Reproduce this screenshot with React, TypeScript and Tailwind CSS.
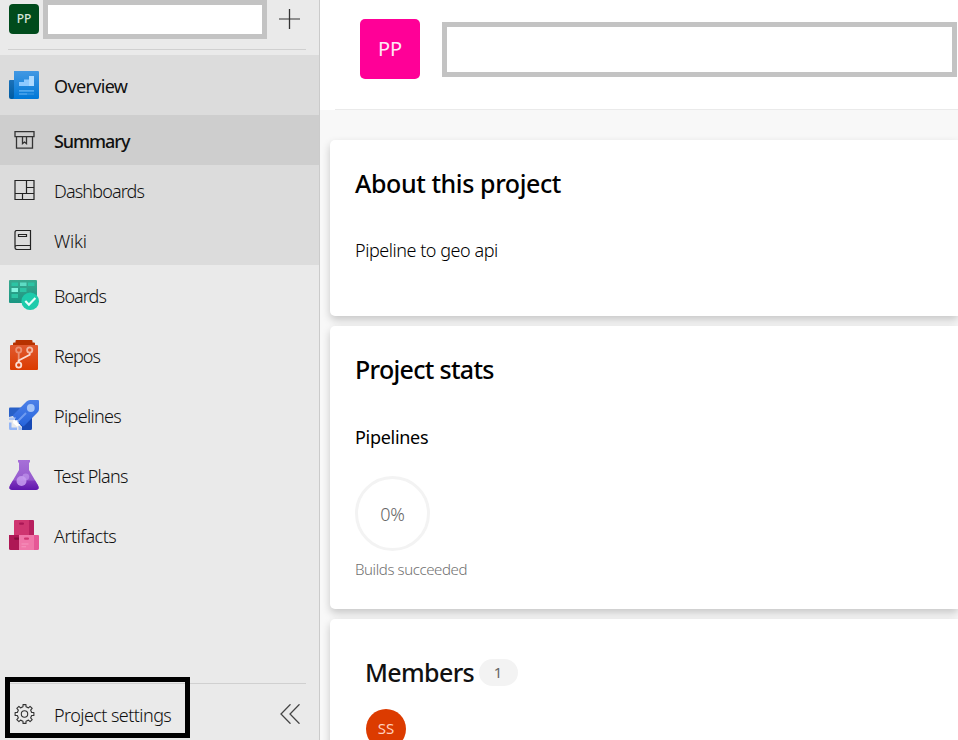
import type { ReactNode } from "react";

function OverviewIcon() {
  return (
    <svg width="30" height="30" viewBox="0 0 30 30">
      <defs>
        <linearGradient id="ov" x1="0" y1="0" x2="0" y2="1"><stop stopColor="#4298e3" /><stop offset="1" stopColor="#0078d7" /></linearGradient>
        <linearGradient id="ovb" x1="0" y1="0" x2="0" y2="1"><stop stopColor="#1b72ba" /><stop offset="1" stopColor="#005ba1" /></linearGradient>
      </defs>
      <g transform="translate(0 1)">
        <path d="M0 10q0-1 1-1h6v19H2q-2 0-2-2z" fill="url(#ovb)" />
        <path d="M5 0h24q1 0 1 1v25.500q0 1.500-1.500 1.500H3q2 0 2-2z" fill="url(#ov)" />
        <path d="M10 15v-4h5V8.500h5V5h5v10z" fill="#8fcaff" />
        <path d="M20 5h5v10h-5z" fill="#c3e5ff" opacity=".6" />
        <path d="M10 19h15v1.700H10zM10 22.200h8v1.600h-8z" fill="#50a8ee" />
        <path d="M18 22.200h7v1.600h-7z" fill="#2c90df" />
      </g>
    </svg>
  );
}

function BoardsIcon() {
  return (
    <svg width="30" height="30" viewBox="0 0 30 30">
      <defs>
        <linearGradient id="bo" x1="0" y1="0" x2="0" y2="1"><stop stopColor="#3aa98f" /><stop offset="1" stopColor="#1a9682" /></linearGradient>
      </defs>
      <rect width="28" height="23" rx="1" fill="url(#bo)" />
      <path d="M2.500 2.500H9V6H2.500zM19 2.500h6.500V6H19zM11 8h6.500v4H11zM2.500 14H9v4H2.500z" fill="#2cc4a4" />
      <path d="M11 2.500h6.500V6H11z" fill="#5ddcc4" />
      <path d="M2.500 8H9v4H2.500z" fill="#83f5df" />
      <circle cx="21.200" cy="21.200" r="8.800" fill="#1dcbab" />
      <path d="M16.300 21l3.600 3.700 6.500-6.700" fill="none" stroke="#e6fffa" strokeWidth="2.200" />
    </svg>
  );
}

function ReposIcon() {
  return (
    <svg width="30" height="30" viewBox="0 0 30 30">
      <defs>
        <linearGradient id="re" x1="0" y1="0" x2="0" y2="1"><stop stopColor="#e05a30" /><stop offset="1" stopColor="#db3b00" /></linearGradient>
      </defs>
      <path d="M4 5V3.500q0-1 1-1h1.500V1q0-1 1-1h15q1 0 1 1v1.500H25q1 0 1 1V5z" fill="#b73200" />
      <path d="M1 6q0-1 1-1h26q1 0 1 1v23q0 1-1 1H2q-1 0-1-1z" fill="url(#re)" />
      <g fill="none" strokeWidth="1.800">
        <path d="M9.700 13v9" stroke="#eb9174" />
        <circle cx="9.700" cy="10" r="2.600" stroke="#eb9174" />
        <path d="M20.700 12.700v2L9.700 20.500v2" stroke="#fbddd3" />
        <circle cx="20.700" cy="10" r="2.600" stroke="#f3b8a4" />
        <circle cx="9.700" cy="25" r="2.600" stroke="#fbddd3" />
      </g>
    </svg>
  );
}

function PipelinesIcon() {
  return (
    <svg width="30" height="30" viewBox="0 0 30 30">
      <defs>
        <linearGradient id="pi" x1="0" y1="0" x2="0" y2="1"><stop stopColor="#4c80e8" /><stop offset="1" stopColor="#2664dc" /></linearGradient>
      </defs>
      <path d="M0 8.500q0-1 1-1h12l-6 13H4L0 17z" fill="#2860c8" />
      <path d="M9 23l14-8v13.500q0 1.500-1.500 1.500H13v-3z" fill="#1749b5" />
      <path d="M17.500 1.500Q19 0 21 0h8q1 0 1 1v8q0 2-1.500 3.500L15 26q-1 .6-2-.4L4.500 17q-1-1-.4-2z" fill="url(#pi)" />
      <circle cx="21.800" cy="8" r="3.900" fill="#a3c3f8" />
      <path d="M8 22l9-9" stroke="#6f9bf0" strokeWidth="2" />
      <path d="M0 17l4-1 2.500 4.500 3.500 3.500L13 27v3H0z" fill="#eaeaea" />
      <path d="M4.500 19l2.500 2 1.500-1v3l3 2-3.500 1.500L4 23z" fill="#fff" />
      <path d="M0 17.500h7l-1.500 2.500H0zM9.500 25.500v4.500H13v-2z" fill="#a9c2f3" />
      <path d="M0 22.500h2.500V27.500H8V30H1.500Q0 30 0 28.500z" fill="#93b5f5" />
    </svg>
  );
}

function TestPlansIcon() {
  return (
    <svg width="30" height="30" viewBox="0 0 30 30">
      <defs>
        <linearGradient id="te" x1="0" y1="0" x2="0" y2="1"><stop stopColor="#a770d8" /><stop offset="1" stopColor="#8c50c8" /></linearGradient>
        <linearGradient id="tf" x1="0" y1="0" x2="0" y2="1"><stop stopColor="#7f37bd" /><stop offset="1" stopColor="#5f16ad" /></linearGradient>
      </defs>
      <path d="M9 0h12v2.500h-1V10l8.500 14.500q3 5.500-2 5.500h-23q-5 0-2-5.500L10 10V2.500H9z" fill="url(#te)" />
      <path d="M4 20.500h22l2.500 4q3 5.500-2 5.500h-23q-5 0-2-5.500z" fill="url(#tf)" />
      <circle cx="12.500" cy="21" r="5" fill="#c79cf0" opacity=".85" />
      <circle cx="16.800" cy="16.800" r="3.400" fill="#c79cf0" opacity=".6" />
    </svg>
  );
}

function ArtifactsIcon() {
  return (
    <svg width="30" height="30" viewBox="0 0 30 30">
      <path d="M5 1q0-1 1-1h14v15H5z" fill="#cf3570" />
      <path d="M20 0h4q1 0 1 1v14h-5z" fill="#b7205f" />
      <path d="M0 15h10v15H1.500Q0 30 0 28.500z" fill="#ae1755" />
      <path d="M10 15h15v15H10z" fill="#f076a9" />
      <path d="M25 15h4q1 0 1 1v12.500q0 1.500-1.500 1.500H25z" fill="#e65796" />
      <rect x="10" y="2.500" width="5" height="2.300" rx="1.100" fill="#ab1756" />
      <path d="M5.200 17.500H10v2.300H6q-1 0-.8-2.300z" fill="#850d3c" />
      <rect x="15" y="17.500" width="5" height="2.300" rx="1.100" fill="#cf3570" />
      <path d="M12.500 23.500h7v1h-7zM12.500 26.300h4.500v1h-4.500z" fill="#f594bd" />
    </svg>
  );
}

function SummaryIcon() {
  return (
    <svg width="21" height="20" viewBox="0 0 21 20" fill="none" stroke="#333">
      <path d="M1 1.700h19v5H1zM2.500 6.700v11.500h16V6.700M8.500 6.700v7l2-1.700 2 1.700v-7" strokeWidth="1.300" />
    </svg>
  );
}

function DashboardsIcon() {
  return (
    <svg width="21" height="20" viewBox="0 0 21 20" fill="none" stroke="#222">
      <path d="M1 .5h19v19H1zM12.500 .5v13M1 13.500h19M12.500 7.500H20M8.500 13.500v6" strokeWidth="1.200" />
    </svg>
  );
}

function WikiIcon() {
  return (
    <svg width="21" height="20" viewBox="0 0 21 20" fill="none" stroke="#222">
      <path d="M16.500 15.500V.5H3q-2 0-2 2v15q0 2 2 2h13.500v-4H3q-2 0-2 2M4.500 4.500h8v2h-8z" strokeWidth="1.200" />
    </svg>
  );
}

const gearTeeth = Array.from({ length: 8 }, (_, i) => {
  const point = (degrees: number, radius: number) => {
    const a = ((i * 45 + degrees) * Math.PI) / 180;
    return `${(10 + radius * Math.sin(a)).toFixed(2)} ${(10 - radius * Math.cos(a)).toFixed(2)}`;
  };
  return [point(-12, 7.3), point(-9, 9.5), point(9, 9.5), point(12, 7.3)].join("L");
}).join("L");

function GearIcon() {
  return (
    <svg width="21" height="20" viewBox="-.5 0 21 20" fill="none" stroke="#333" strokeWidth="1.100" strokeLinejoin="round">
      <path d={`M${gearTeeth}Z`} />
      <circle cx="10" cy="10" r="3.200" />
    </svg>
  );
}

type RowProps = { icon: ReactNode; label: string; className: string; text: string };

function Row({ icon, label, className, text }: RowProps) {
  return (
    <a className={`flex items-center pl-[9px] ${className}`}>
      <span className="flex w-[30px] shrink-0 justify-center">{icon}</span>
      <span className={`ml-[15px] whitespace-nowrap pt-px ${text}`}>{label}</span>
    </a>
  );
}

function Sidebar() {
  return (
    <nav className="relative flex h-full w-[320px] shrink-0 flex-col border-r border-[#cbcbcb] bg-[#eaeaea]">
      <div className="ml-2 mr-[13px] flex h-[50px] shrink-0 items-start border-b border-[#d0d0d0]">
        <div className="ml-px mt-1 flex size-[30px] items-center justify-center rounded-[4px] bg-[#004b1c] text-[12px] font-medium text-[#d5e5da]">PP</div>
        <div className="ml-1 h-[39px] w-[224px] border-5 border-[#c3c3c3] bg-white" />
        <svg className="ml-3 mt-[9px]" width="21" height="20" viewBox="0 0 21 20">
          <path d="M0 10h21" stroke="#777" strokeWidth="1.600" />
          <path d="M10.500 0v20" stroke="#333" strokeWidth="1.300" />
        </svg>
      </div>
      <div className="mt-[5px] bg-[#dcdcdc]">
        <Row icon={<OverviewIcon />} label="Overview" className="h-[60px]" text="font-[430] tracking-[-0.65px]" />
        <Row icon={<SummaryIcon />} label="Summary" className="h-[50px] bg-[#cecece]" text="font-medium tracking-[-1.05px]" />
        <Row icon={<DashboardsIcon />} label="Dashboards" className="h-[50px]" text="font-[340] tracking-[-0.85px]" />
        <Row icon={<WikiIcon />} label="Wiki" className="h-[50px]" text="font-[340] tracking-[-0.2px]" />
      </div>
      <Row icon={<BoardsIcon />} label="Boards" className="h-[60px]" text="font-[340] tracking-[-0.95px]" />
      <Row icon={<ReposIcon />} label="Repos" className="h-[60px]" text="font-[340] tracking-[-0.9px]" />
      <Row icon={<PipelinesIcon />} label="Pipelines" className="h-[60px]" text="font-[340] tracking-[-0.65px]" />
      <Row icon={<TestPlansIcon />} label="Test Plans" className="h-[60px]" text="font-[340] tracking-[-0.75px]" />
      <Row icon={<ArtifactsIcon />} label="Artifacts" className="h-[60px]" text="font-[340] tracking-[-0.5px]" />
      <div className="mt-auto flex h-[57px] shrink-0 flex-col">
        <div className="ml-2 mr-[13px] h-px shrink-0 bg-[#d0d0d0]" />
        <div className="flex h-[60px] shrink-0 items-center">
          <Row icon={<GearIcon />} label="Project settings" className="h-[60px]" text="font-[340] tracking-[-0.56px]" />
          <svg className="ml-auto mr-[19px]" width="20" height="20" viewBox="0 0 20 20" fill="none" stroke="#444" strokeWidth="1.300">
            <path d="M10.500 .3L1 10l9.500 9.700M19.500 .3L10 10l9.500 9.700" />
          </svg>
        </div>
      </div>
      <div className="absolute left-[5px] top-[677px] h-[61px] w-[185px] border-5 border-black" />
    </nav>
  );
}

const card = "shrink-0 rounded-l-[5px] bg-white pl-[25px] shadow-[0_4px_9px_rgba(0,0,0,0.2)]";
const title = "whitespace-nowrap text-[25px] leading-8 font-medium";

export default function App() {
  return (
    <div className="flex h-[740px] w-[958px] overflow-hidden bg-[#f8f8f8] font-['Noto_Sans','Segoe_UI',sans-serif] text-[18px] leading-6 text-[#111]">
      <Sidebar />
      <main className="flex min-w-0 flex-1 flex-col overflow-hidden">
        <header className="flex h-[110px] shrink-0 flex-col bg-white">
          <div className="flex h-[109px] items-start">
            <div className="ml-10 mt-[19px] flex size-[60px] items-center justify-center rounded-[5px] bg-[#ff0097] text-[20px] text-[#ffe8f5]">PP</div>
            <div className="ml-[22px] mt-[22px] h-[55px] w-[515px] border-5 border-[#c3c3c3] bg-white" />
          </div>
          <div className="ml-[15px] h-px bg-[#eaeaea]" />
        </header>
        <div className="mt-[30px] flex flex-col gap-[10px] pl-[10px]">
          <section className={`h-[176px] ${card}`}>
            <h2 className={`pt-[27px] text-black tracking-[-0.41px] ${title}`}>About this project</h2>
            <p className="mt-[39px] whitespace-nowrap font-[340] tracking-[-0.45px] text-black">Pipeline to geo api</p>
          </section>
          <section className={`h-[283px] ${card}`}>
            <h2 className={`pt-[27px] text-black tracking-[-0.7px] ${title}`}>Project stats</h2>
            <h3 className="mt-[40px] whitespace-nowrap tracking-[-0.3px] text-black">Pipelines</h3>
            <div className="mt-[27px] flex size-[75px] items-center justify-center rounded-full border-[3px] border-[#f3f3f3] font-light text-[#666] tracking-[-0.3px]">0%</div>
            <p className="mt-[6px] whitespace-nowrap text-[15px] font-[340] tracking-[-0.4px] text-[#707070]">Builds succeeded</p>
          </section>
          <section className={`h-[180px] ${card}`}>
            <div className="ml-[10px] flex items-center pt-[37px]">
              <h2 className={`tracking-[-0.64px] ${title}`}>Members</h2>
              <span className="ml-[5px] flex h-[27px] w-[39px] items-center justify-center rounded-full bg-[#f3f3f3] pr-px text-[15px] text-[#666]">1</span>
            </div>
            <div className="ml-[11px] mt-[21px] flex size-10 items-center justify-center rounded-full bg-[#dc3b00] pb-0.5 text-[15px] text-[#ffd0bf]">SS</div>
          </section>
        </div>
      </main>
    </div>
  );
}
